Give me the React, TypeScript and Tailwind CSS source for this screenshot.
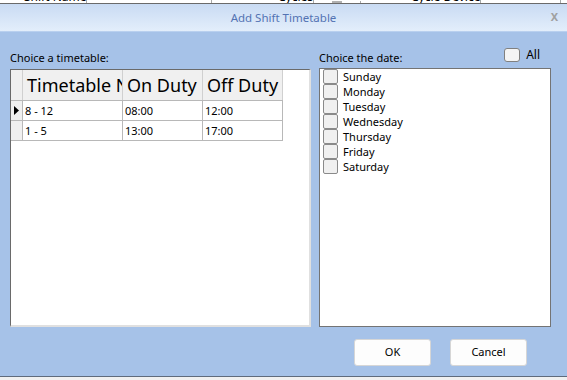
import React from 'react'

const DAYS = ['Sunday', 'Monday', 'Tuesday', 'Wednesday', 'Thursday', 'Friday', 'Saturday']

const ROWS = [
  { name: '8 - 12', on: '08:00', off: '12:00', current: true },
  { name: '1 - 5', on: '13:00', off: '17:00', current: false },
]

function Check() {
  return <span className="block w-[15px] h-[15px] shrink-0 rounded-[2px] border border-[#8a8a8a] bg-[#f0f0f0]" />
}

export default function App() {
  return (
    <div className="w-[567px] h-[380px] overflow-hidden flex flex-col bg-[#f0f0f0] font-['Noto_Sans',sans-serif] text-black">
      {/* grid behind the dialog, only its bottom edge shows */}
      <div className="h-[3px] overflow-hidden bg-white flex items-end text-[12px] leading-[12px]">
        <div className="w-[87px] shrink-0 pl-[24px] border-r border-[#a8a8a8] whitespace-nowrap">Shift Name</div>
        <div className="w-[125px] shrink-0 border-r border-[#a8a8a8]">&nbsp;</div>
        <div className="w-[102px] shrink-0 pl-[66px] border-r border-[#a8a8a8]">Cycles</div>
        <div className="w-[47px] shrink-0 border-r border-[#a8a8a8] flex justify-center items-end">
          <span className="block w-[10px] h-[2px] bg-[#b0b0b0]" />
        </div>
        <div className="w-[120px] shrink-0 pl-[50px] border-r border-[#a8a8a8] whitespace-nowrap">Cycle Device</div>
        <div className="w-[80px] shrink-0 border-r border-[#a8a8a8]">&nbsp;</div>
      </div>
      <div className="h-px bg-[#6a6a6a]" />

      {/* title bar */}
      <div className="h-[27px] grid grid-cols-[1fr_auto_1fr] items-center bg-gradient-to-b from-[#c9dbf3] to-[#e3eefb]">
        <div />
        <div className="text-[11.5px] text-[#5373b3]">Add Shift Timetable</div>
        <div className="flex justify-end pr-[9px] text-[11px] font-bold text-[#a0a0a0]">X</div>
      </div>
      <div className="h-px bg-[#b9d0ef]" />

      {/* body */}
      <div className="h-[344px] bg-[#a6c2e8] flex flex-col">
        <div className="flex px-[10px] pt-[18px]">
          <div className="w-[301px] flex flex-col">
            <div className="text-[11px] leading-[15px] h-[15px]">Choice a timetable:</div>
            <div className="mt-[4px] h-[258px] bg-white border-l border-t border-[#6a6a6a] border-r-2 border-b-2 border-r-[#e0e0e0] border-b-[#e0e0e0] flex flex-col">
              <div className="flex h-[31px] bg-[#f0f0f0] w-[272px] border-b border-[#b8b8b8] text-[18px] leading-none overflow-hidden">
                <div className="w-[12px] shrink-0 border-r border-[#d0d0d0]" />
                <div className="w-[100px] shrink-0 border-r border-[#d0d0d0] pl-[4px] flex items-center overflow-hidden whitespace-nowrap">Timetable Name</div>
                <div className="w-[80px] shrink-0 border-r border-[#d0d0d0] pl-[4px] flex items-center overflow-hidden whitespace-nowrap">On Duty</div>
                <div className="w-[80px] shrink-0 border-r border-[#d0d0d0] pl-[4px] flex items-center overflow-hidden whitespace-nowrap">Off Duty</div>
              </div>
              {ROWS.map((r) => (
                <div key={r.name} className="flex h-[20px] w-[272px] border-b border-[#b8b8b8] text-[11px] leading-none">
                  <div className="w-[12px] shrink-0 bg-[#f0f0f0] border-r border-[#b8b8b8] flex items-center justify-center">
                    {r.current && (
                      <svg width="5" height="9" viewBox="0 0 5 9">
                        <path d="M0 0 L5 4.5 L0 9 Z" fill="#000" />
                      </svg>
                    )}
                  </div>
                  <div className="w-[100px] shrink-0 border-r border-[#b8b8b8] pl-[2px] flex items-center">{r.name}</div>
                  <div className="w-[80px] shrink-0 border-r border-[#b8b8b8] pl-[2px] flex items-center">{r.on}</div>
                  <div className="w-[80px] shrink-0 border-r border-[#b8b8b8] pl-[2px] flex items-center">{r.off}</div>
                </div>
              ))}
            </div>
          </div>

          <div className="w-[232px] ml-[8px] flex flex-col">
            <div className="flex justify-between items-start h-[15px] pr-[11px]">
              <div className="text-[11px] leading-[15px]">Choice the date:</div>
              <div className="flex items-center gap-[6px] -mt-[2px]">
                <span className="block w-[16px] h-[14px] rounded-[3px] border border-[#808080] bg-[#f4f4f4]" />
                <span className="text-[12px] leading-[14px]">All</span>
              </div>
            </div>
            <div className="mt-[3px] h-[259px] bg-white border border-[#747474] pl-[3px] flex flex-col">
              {DAYS.map((d) => (
                <div key={d} className="flex items-center gap-[5px] h-[15px] text-[11px] leading-none">
                  <Check />
                  <span>{d}</span>
                </div>
              ))}
            </div>
          </div>
        </div>

        <div className="flex justify-end gap-[19px] pr-[40px] mt-[12px]">
          <button className="w-[77px] h-[27px] rounded-[3px] bg-[#fdfdfd] border border-[#d6d6d6] text-[11px]">OK</button>
          <button className="w-[77px] h-[27px] rounded-[3px] bg-[#fdfdfd] border border-[#d6d6d6] text-[11px]">Cancel</button>
        </div>
      </div>
      <div className="h-px bg-[#5f6b7c]" />
      <div className="flex-1 bg-[#f0f0f0]" />
    </div>
  )
}
